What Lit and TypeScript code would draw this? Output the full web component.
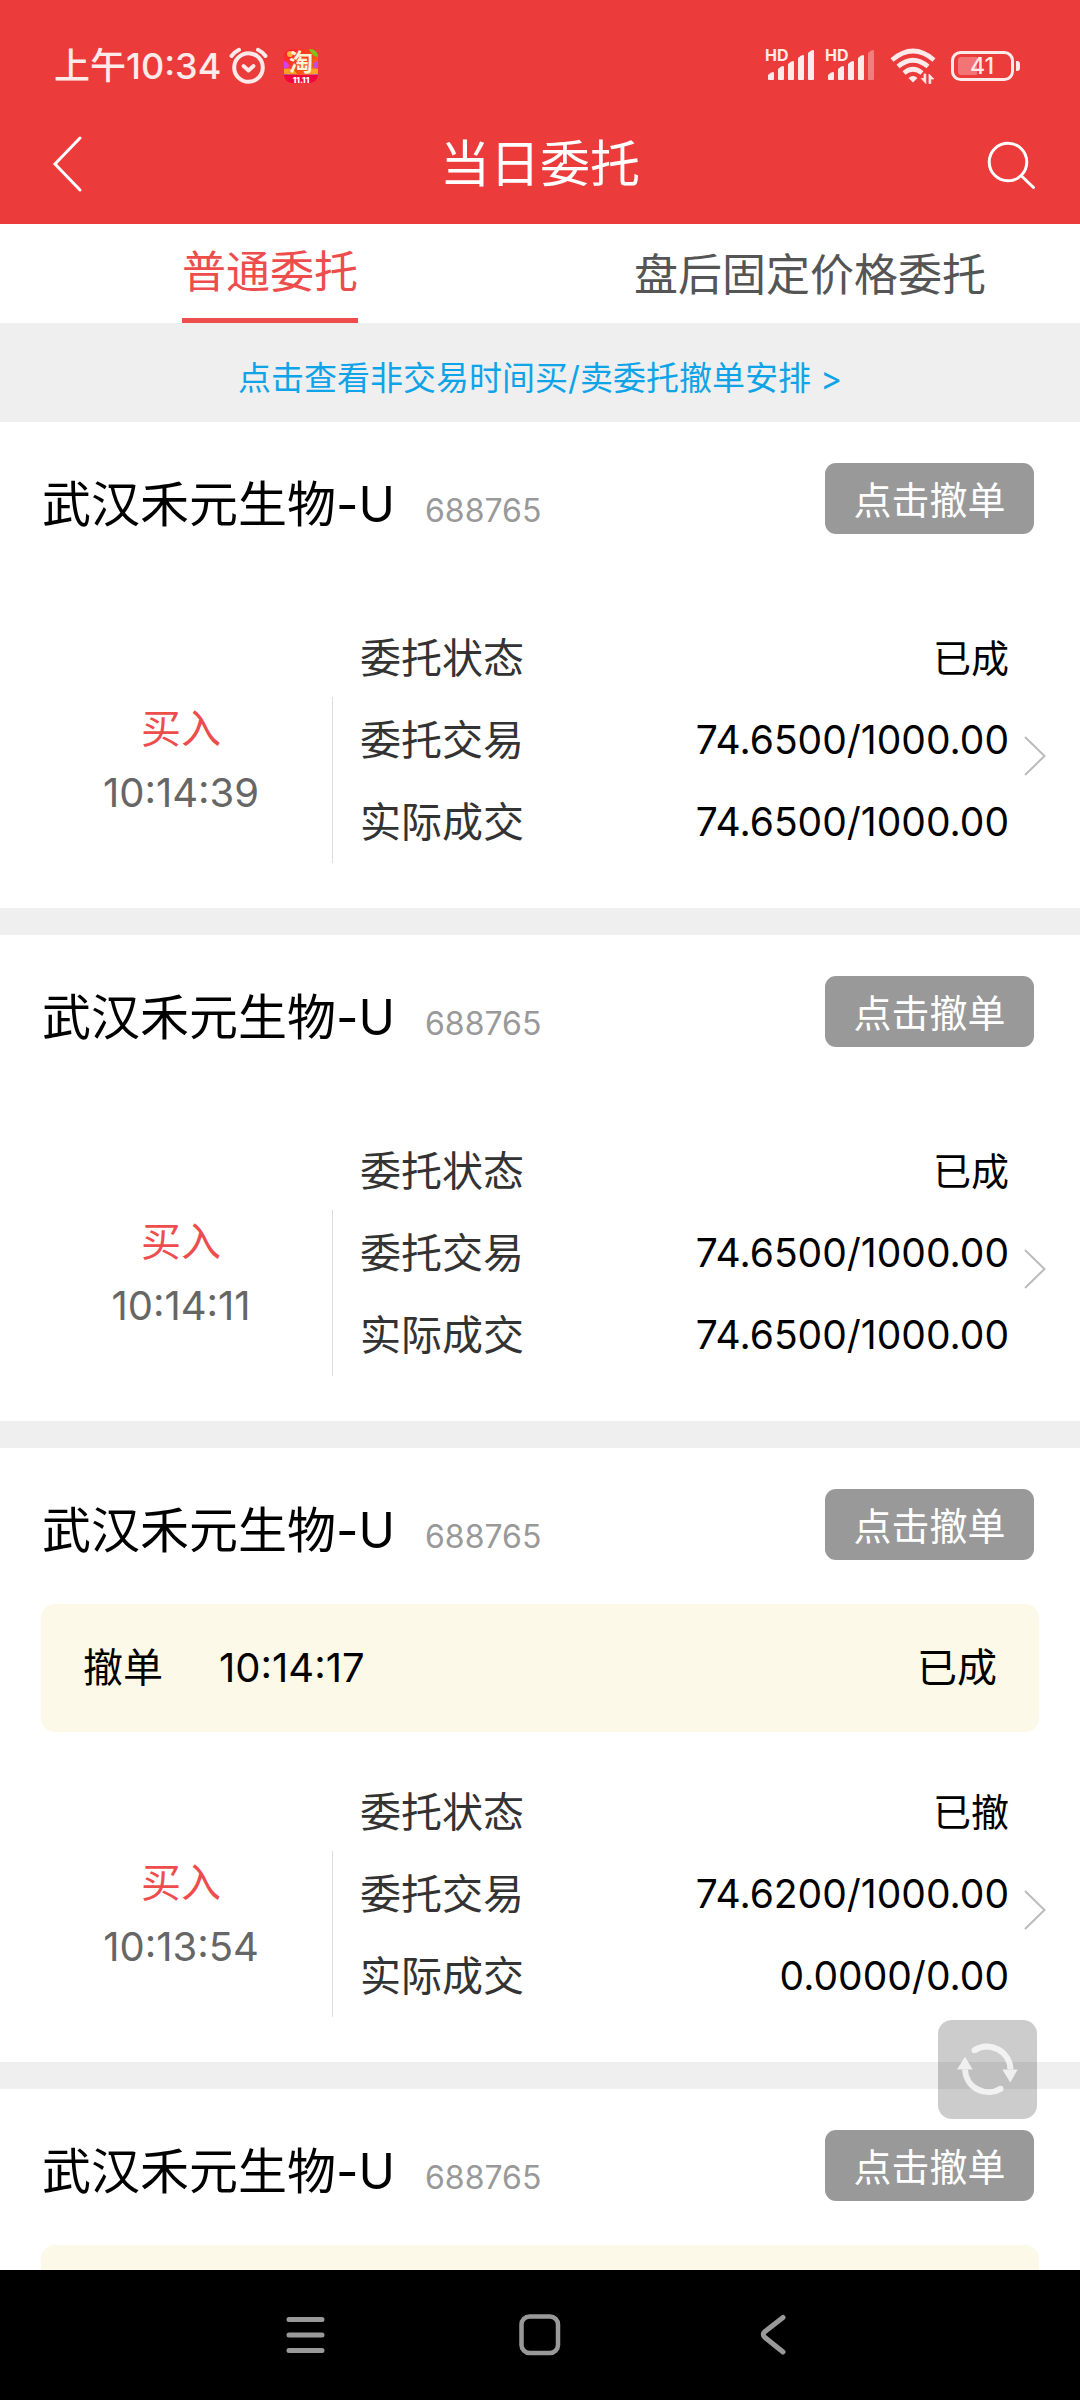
import { LitElement, html, css, svg, nothing } from "lit";
import { customElement, property } from "lit/decorators.js";
import { classMap } from "lit/directives/class-map.js";

interface Order {
  name: string;
  code: string;
  side: string;
  time: string;
  status: string;
  ordered: string;
  filled: string;
  cancel?: { time: string; status: string };
}

const ORDERS: Order[] = [
  {
    name: "武汉禾元生物-U",
    code: "688765",
    side: "买入",
    time: "10:14:39",
    status: "已成",
    ordered: "74.6500/1000.00",
    filled: "74.6500/1000.00",
  },
  {
    name: "武汉禾元生物-U",
    code: "688765",
    side: "买入",
    time: "10:14:11",
    status: "已成",
    ordered: "74.6500/1000.00",
    filled: "74.6500/1000.00",
  },
  {
    name: "武汉禾元生物-U",
    code: "688765",
    side: "买入",
    time: "10:13:54",
    status: "已撤",
    ordered: "74.6200/1000.00",
    filled: "0.0000/0.00",
    cancel: { time: "10:14:17", status: "已成" },
  },
  {
    name: "武汉禾元生物-U",
    code: "688765",
    side: "",
    time: "",
    status: "",
    ordered: "",
    filled: "",
    cancel: { time: "", status: "" },
  },
];

const reset = css`
  * {
    box-sizing: border-box;
  }
  button {
    margin: 0;
    padding: 0;
    border: 0;
    background: none;
    font: inherit;
    color: inherit;
    cursor: pointer;
  }
  a {
    color: inherit;
    text-decoration: none;
  }
  svg {
    display: block;
    flex: none;
  }
`;

@customElement("status-bar")
export class StatusBar extends LitElement {
  static styles = [
    reset,
    css`
      :host {
        display: flex;
        align-items: center;
        justify-content: space-between;
        height: 100px;
        padding: 32px 59px 0 54px;
        color: #ffeaea;
      }
      .group {
        display: flex;
        align-items: center;
      }
      .clock {
        font-size: 36px;
        line-height: 44px;
        font-weight: 500;
      }
      .alarm {
        margin-left: 8px;
      }
      .app {
        margin-left: 16px;
      }
      .signals {
        gap: 15px;
      }
      .pair {
        display: flex;
        gap: 7px;
      }
    `,
  ];

  private signal(active: number) {
    const tops = [23, 17, 12, 6, 1];
    return html`<svg width="53" height="42" viewBox="-3 -4 53 42" fill="currentColor" aria-hidden="true">
      <text x="0" y="12" font-size="16" font-weight="700">HD</text>
      ${tops.map((top, i) => {
        const x = 3 + i * 10;
        return svg`<path opacity=${i < active ? 1 : 0.38}
          d="M${x} ${top + 3}Q${x + 3} ${top} ${x + 5} ${top}Q${x + 6} ${top} ${x + 6} ${top + 1}V30Q${x + 6} 31 ${x + 5} 31H${x + 1}Q${x} 31 ${x} 30Z" />`;
      })}
    </svg>`;
  }

  render() {
    return html`
      <div class="group">
        <span class="clock">上午10:34</span>
        <svg class="alarm" width="39" height="38" viewBox="0 0 39 38" fill="none" stroke="currentColor" stroke-linecap="round" aria-hidden="true">
          <circle cx="19.500" cy="20.500" r="14.300" stroke-width="4" />
          <path d="M14.500 19L19.500 23.500L24.500 19" stroke-width="3.800" stroke-linejoin="round" />
          <path d="M2.500 9Q5.500 5 10 2.800M36.500 9Q33.500 5 29 2.800" stroke-width="4" />
        </svg>
        <svg class="app" width="34" height="50" viewBox="0 -8 34 50" aria-hidden="true">
          <defs>
            <linearGradient id="app-bg" x1="0" y1="0" x2="1" y2="1">
              <stop offset="0" stop-color="#ff1a3c" />
              <stop offset="0.500" stop-color="#fb4a16" />
              <stop offset="1" stop-color="#ff8a1c" />
            </linearGradient>
            <clipPath id="app-clip"><rect width="34" height="34" rx="8" /></clipPath>
          </defs>
          <g clip-path="url(#app-clip)">
            <rect width="34" height="34" fill="url(#app-bg)" />
            <path d="M25 0H34V8Q28 7 25 0Z" fill="#7bc51c" />
            <circle cx="6" cy="5" r="3" fill="#ffb13a" />
            <path d="M0 12Q5 13 5 18L0 20Z" fill="#d43ff0" />
            <path d="M34 12Q28 13 29 18L34 20Z" fill="#c04be8" />
            <path d="M0 20Q9 18 13 25H0Z" fill="#ff9d1e" />
            <path d="M34 20Q26 18 21 25H34Z" fill="#ffa02a" />
            <path d="M0 25Q17 27 34 25V27H0Z" fill="#a05ad8" />
            <rect y="26" width="34" height="8" fill="#f2063f" />
          </g>
          <text x="17" y="22" font-size="24" font-weight="700" fill="#fff3d8" text-anchor="middle">淘</text>
          <text x="17" y="34" font-size="8" font-weight="900" fill="#ffffff" text-anchor="middle">11.11</text>
        </svg>
      </div>
      <div class="group signals">
        <div class="pair">${this.signal(5)}${this.signal(4)}</div>
        <svg width="46" height="36" viewBox="0 0 46 36" fill="none" stroke="currentColor" aria-hidden="true">
          <path d="M2 12Q23 -6 44 12" stroke-width="4.600" />
          <path d="M8 18.500Q23 6 38 18.500" stroke-width="4.600" />
          <path d="M14 25Q23 17.500 32 25" stroke-width="4.600" />
          <path d="M18.500 30Q23 26 27.500 30L23 34.500Z" fill="currentColor" stroke="none" />
          <path d="M35.800 26V35.500L31.300 30.500H34V26ZM39 35.500V26L43.800 31H40.800V35.500Z" fill="currentColor" stroke="currentColor" stroke-width="0.800" />
        </svg>
        <svg width="70" height="32" viewBox="0 0 70 32" fill="none" aria-hidden="true">
          <rect x="1.500" y="2.500" width="60" height="27" rx="8" stroke="currentColor" stroke-width="3" />
          <path d="M10 7H26V25H10Q7 25 7 22V10Q7 7 10 7Z" fill="#f27474" />
          <path d="M65 11H66Q69 11 69 14V18Q69 21 66 21H65Z" fill="currentColor" />
          <text x="31" y="24" font-size="23" font-weight="500" fill="currentColor" text-anchor="middle">41</text>
        </svg>
      </div>
    `;
  }
}

@customElement("order-card")
export class OrderCard extends LitElement {
  @property({ attribute: false }) order!: Order;

  static styles = [
    reset,
    css`
      :host {
        display: block;
        background: #ffffff;
        padding-bottom: 45px;
      }
      .head {
        display: flex;
        align-items: flex-start;
        height: 156px;
        padding: 41px 46px 0 42px;
      }
      .title {
        display: flex;
        align-items: baseline;
        gap: 30px;
        flex: 1;
        margin: 0;
        font-size: 49px;
        line-height: 84px;
        font-weight: 400;
        color: #000000;
      }
      .code {
        font-size: 32px;
        color: #999999;
      }
      .cancel {
        width: 209px;
        height: 71px;
        padding-top: 2px;
        border-radius: 11px;
        background: #999999;
        color: #ffffff;
        font-size: 38px;
        line-height: 64px;
      }
      .banner {
        display: flex;
        align-items: center;
        gap: 56px;
        height: 128px;
        margin: 0 41px;
        padding: 0 42px;
        border-radius: 14px;
        background: #fdf9e8;
        font-size: 40px;
        line-height: 64px;
        color: #000000;
      }
      .result {
        margin-left: auto;
      }
      .body {
        display: grid;
        grid-template-columns: 333px 1fr auto;
        padding: 39px 34px 0 0;
      }
      .side {
        align-self: end;
        height: 166px;
        padding-left: 30px;
        border-right: 1px solid #dddddd;
        text-align: center;
        font-size: 40px;
        line-height: 64px;
        color: #666666;
      }
      .buy {
        color: #ee4d4d;
      }
      .side span {
        display: block;
      }
      .facts {
        margin: 0;
        padding: 0 15px 0 27px;
      }
      .fact {
        display: flex;
        justify-content: space-between;
        line-height: 82px;
      }
      .fact dt {
        font-size: 41px;
        color: #333333;
      }
      .fact dd {
        margin: 0;
        font-size: 39px;
        color: #000000;
      }
      .fact .state {
        font-size: 38px;
      }
      .go {
        align-self: center;
        padding-top: 32px;
      }
    `,
  ];

  render() {
    const o = this.order;
    return html`
      <div class="head">
        <h2 class="title">${o.name}<span class="code">${o.code}</span></h2>
        <button class="cancel" type="button">点击撤单</button>
      </div>
      ${o.cancel
        ? html`<div class="banner">
            ${o.cancel.time
              ? html`<span>撤单</span><time>${o.cancel.time}</time><span class="result">${o.cancel.status}</span>`
              : nothing}
          </div>`
        : nothing}
      ${o.side
        ? html`<a class="body" href="#detail">
            <div class="side"><span class="buy">${o.side}</span><span>${o.time}</span></div>
            <dl class="facts">
              <div class="fact"><dt>委托状态</dt><dd class="state">${o.status}</dd></div>
              <div class="fact"><dt>委托交易</dt><dd>${o.ordered}</dd></div>
              <div class="fact"><dt>实际成交</dt><dd>${o.filled}</dd></div>
            </dl>
            <div class="go">
              <svg width="22" height="40" viewBox="0 0 22 40" fill="none" stroke="#bbbbbb" stroke-width="2" aria-hidden="true">
                <path d="M1 1L20.500 20L1 39" />
              </svg>
            </div>
          </a>`
        : nothing}
    `;
  }
}

@customElement("app-root")
export class AppRoot extends LitElement {
  static properties = { tab: { state: true } };
  declare tab: number;

  constructor() {
    super();
    this.tab = 0;
  }

  static styles = [
    reset,
    css`
      :host {
        display: flex;
        flex-direction: column;
        height: 100vh;
        overflow: hidden;
        background: #efefef;
        font-family: "Inter", "Noto Sans CJK SC", sans-serif;
      }
      .top {
        background: #eb3b3b;
        color: #ffffff;
      }
      .bar {
        display: grid;
        grid-template-columns: 1fr auto 1fr;
        align-items: center;
        height: 124px;
        padding: 3px 44px 0;
      }
      .bar h1 {
        margin: 0;
        font-size: 50px;
        line-height: 72px;
        font-weight: 400;
      }
      .bar .find {
        justify-self: end;
      }
      .tabs {
        display: grid;
        grid-template-columns: 1fr 1fr;
        justify-items: center;
        background: #ffffff;
      }
      .tab {
        height: 99px;
        padding-top: 2px;
        font-size: 44px;
        line-height: 66px;
        color: #555555;
      }
      .tab.on {
        border-bottom: 5px solid #ee4d4d;
        color: #ee4d4d;
      }
      .notice {
        height: 99px;
        padding-top: 12px;
        text-align: center;
        font-size: 33px;
        line-height: 87px;
        color: #0fa3e8;
      }
      .list {
        display: flex;
        flex-direction: column;
        gap: 27px;
        flex: 1;
        min-height: 0;
        overflow-y: auto;
        scrollbar-width: none;
      }
      .list order-card {
        flex: none;
      }
      .content {
        position: relative;
        display: flex;
        flex-direction: column;
        flex: 1;
        min-height: 0;
      }
      .refresh {
        position: absolute;
        right: 43px;
        bottom: 151px;
        border-radius: 14px;
        background: rgba(0, 0, 0, 0.2);
      }
      .system {
        display: grid;
        grid-template-columns: 1fr 1fr 1fr;
        align-items: center;
        justify-items: center;
        height: 130px;
        padding: 0 189px;
        background: #000000;
        color: #999999;
      }
    `,
  ];

  render() {
    return html`
      <header class="top">
        <status-bar></status-bar>
        <div class="bar">
          <button type="button" aria-label="返回">
            <svg width="39" height="56" viewBox="-7 0 39 56" fill="none" stroke="currentColor" stroke-width="3" stroke-linecap="round" aria-hidden="true">
              <path d="M29 2L4 28L29 54" />
            </svg>
          </button>
          <h1>当日委托</h1>
          <button class="find" type="button" aria-label="搜索">
            <svg width="50" height="50" viewBox="0 0 50 50" fill="none" stroke="currentColor" stroke-width="3" stroke-linecap="round" aria-hidden="true">
              <circle cx="22" cy="23" r="18.800" />
              <path d="M35.500 37L47.500 48.500" />
            </svg>
          </button>
        </div>
      </header>
      <nav class="tabs">
        ${["普通委托", "盘后固定价格委托"].map(
          (label, i) => html`<button
            type="button"
            class=${classMap({ tab: true, on: this.tab === i })}
            @click=${() => (this.tab = i)}
          >${label}</button>`
        )}
      </nav>
      <a class="notice" href="#notice">点击查看非交易时间买/卖委托撤单安排 &gt;</a>
      <main class="content">
        <div class="list">${ORDERS.map((o) => html`<order-card .order=${o}></order-card>`)}</div>
        <button class="refresh" type="button" aria-label="刷新">
          <svg width="99" height="99" viewBox="0 0 99 99" fill="none" stroke="#ffffff" opacity="0.760" aria-hidden="true">
            <path d="M36.500 30.200A23.500 23.500 0 0 1 72.500 49.500M62.500 68.800A23.500 23.500 0 0 1 27 49.500" stroke-width="6" stroke-linecap="butt" />
            <path d="M64.300 49.500H79.700L72.300 62.500ZM19 49.500H34.700L27 36.800Z" fill="#ffffff" stroke="none" />
            <circle cx="36.500" cy="30.200" r="3" fill="#ffffff" stroke="none" />
            <circle cx="62.500" cy="68.800" r="3" fill="#ffffff" stroke="none" />
          </svg>
        </button>
      </main>
      <footer class="system">
        <button type="button" aria-label="最近任务">
          <svg width="40" height="42" viewBox="0 0 40 42" fill="none" stroke="currentColor" stroke-width="5" stroke-linecap="round" aria-hidden="true">
            <path d="M3 5.500H36M3 21H36M3 36.500H36" />
          </svg>
        </button>
        <button type="button" aria-label="主屏幕">
          <svg width="42" height="42" viewBox="0 0 42 42" fill="none" stroke="currentColor" stroke-width="4.500" aria-hidden="true">
            <rect x="2.500" y="2.500" width="36.500" height="36.500" rx="8" />
          </svg>
        </button>
        <button type="button" aria-label="后退">
          <svg width="28" height="42" viewBox="0 0 28 42" fill="none" stroke="currentColor" stroke-width="5" stroke-linecap="round" stroke-linejoin="round" aria-hidden="true">
            <path d="M23 3.500L5 17.500Q1.500 20.500 5 23.500L23 38" />
          </svg>
        </button>
      </footer>
    `;
  }
}
